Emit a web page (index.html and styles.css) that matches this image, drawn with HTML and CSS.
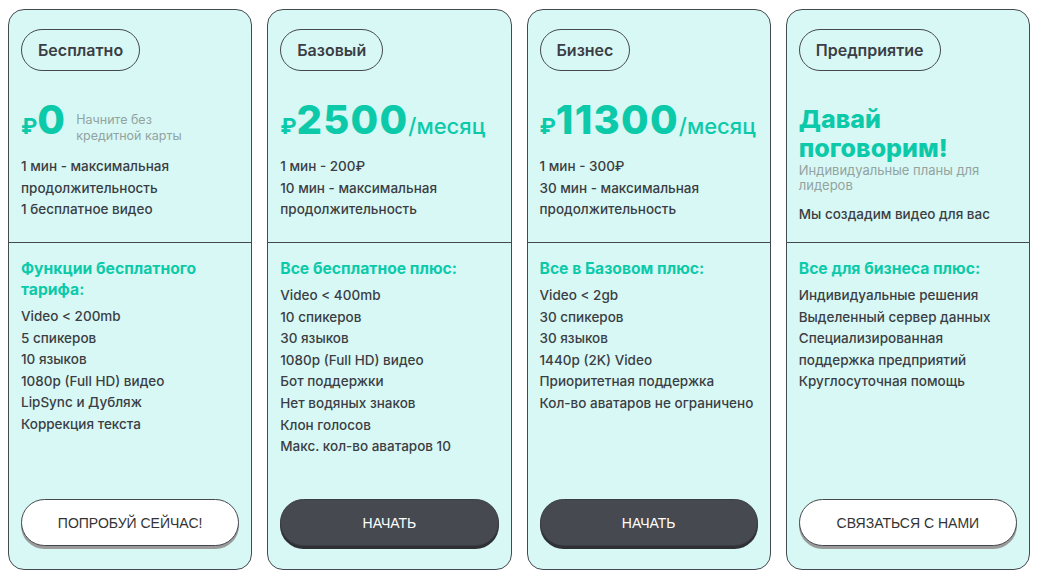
FILE: index.html
```html
<!DOCTYPE html>
<html lang="ru">
<head>
<meta charset="utf-8">
<link rel="stylesheet" href="styles.css">
</head>
<body>
<div class="plans">
  <div class="card">
    <div class="top">
      <div class="pill">Бесплатно</div>
      <div class="price-row">
        <div class="price"><span class="cur">₽</span>0</div>
        <div class="note">Начните без<br>кредитной карты</div>
      </div>
      <div class="list">
        <div>1 мин - максимальная продолжительность</div>
        <div>1 бесплатное видео</div>
      </div>
    </div>
    <div class="bottom">
      <div class="head">Функции бесплатного тарифа:</div>
      <div class="list">
        <div>Video &lt; 200mb</div>
        <div>5 спикеров</div>
        <div>10 языков</div>
        <div>1080p (Full HD) видео</div>
        <div>LipSync и Дубляж</div>
        <div>Коррекция текста</div>
      </div>
      <button class="btn light">ПОПРОБУЙ СЕЙЧАС!</button>
    </div>
  </div>

  <div class="card">
    <div class="top">
      <div class="pill">Базовый</div>
      <div class="price-row">
        <div class="price"><span class="cur">₽</span>2500<span class="per">/месяц</span></div>
      </div>
      <div class="list">
        <div>1 мин - 200₽</div>
        <div>10 мин - максимальная продолжительность</div>
      </div>
    </div>
    <div class="bottom">
      <div class="head">Все бесплатное плюс:</div>
      <div class="list">
        <div>Video &lt; 400mb</div>
        <div>10 спикеров</div>
        <div>30 языков</div>
        <div>1080p (Full HD) видео</div>
        <div>Бот поддержки</div>
        <div>Нет водяных знаков</div>
        <div>Клон голосов</div>
        <div>Макс. кол-во аватаров 10</div>
      </div>
      <button class="btn dark">НАЧАТЬ</button>
    </div>
  </div>

  <div class="card">
    <div class="top">
      <div class="pill">Бизнес</div>
      <div class="price-row">
        <div class="price"><span class="cur">₽</span>11300<span class="per">/месяц</span></div>
      </div>
      <div class="list">
        <div>1 мин - 300₽</div>
        <div>30 мин - максимальная продолжительность</div>
      </div>
    </div>
    <div class="bottom">
      <div class="head">Все в Базовом плюс:</div>
      <div class="list">
        <div>Video &lt; 2gb</div>
        <div>30 спикеров</div>
        <div>30 языков</div>
        <div>1440p (2K) Video</div>
        <div>Приоритетная поддержка</div>
        <div>Кол-во аватаров не ограничено</div>
      </div>
      <button class="btn dark">НАЧАТЬ</button>
    </div>
  </div>

  <div class="card">
    <div class="top">
      <div class="pill">Предприятие</div>
      <div class="talk">Давай поговорим!</div>
      <div class="sub">Индивидуальные планы для лидеров</div>
      <div class="list talk-list">
        <div>Мы создадим видео для вас</div>
      </div>
    </div>
    <div class="bottom">
      <div class="head">Все для бизнеса плюс:</div>
      <div class="list">
        <div>Индивидуальные решения</div>
        <div>Выделенный сервер данных</div>
        <div>Специализированная поддержка предприятий</div>
        <div>Круглосуточная помощь</div>
      </div>
      <button class="btn light">СВЯЗАТЬСЯ С НАМИ</button>
    </div>
  </div>
</div>
</body>
</html>
```

FILE: styles.css
```css
* { box-sizing: border-box; }

body {
  margin: 9px 8px 8px;
  font-family: Inter, "Noto Sans", sans-serif;
  color: #3b3e44;
  background: #ffffff;
}

.plans {
  display: grid;
  grid-template-columns: repeat(4, 1fr);
  gap: 15px;
}

.card {
  height: 561px;
  background: #d8f8f5;
  border: 1px solid #45494f;
  border-radius: 16px;
  display: flex;
  flex-direction: column;
}

.top {
  height: 233px;
  padding: 19px 12px 0;
  border-bottom: 1px solid #45494f;
  flex: none;
}

.pill {
  display: inline-block;
  height: 42px;
  line-height: 40px;
  padding: 0 16px;
  border: 1px solid #45494f;
  border-radius: 21px;
  font-size: 16px;
  font-weight: 600;
  color: #3b3e44;
}

.price-row {
  display: flex;
  align-items: flex-end;
  margin-top: 33px;
  height: 44px;
}

.price {
  font-size: 40px;
  font-weight: 800;
  line-height: 44px;
  color: #0ccaa9;
  letter-spacing: 1.2px;
  white-space: nowrap;
}

.cur {
  font-size: 22px;
  font-weight: 700;
  letter-spacing: 0;
}

.per {
  font-size: 22px;
  font-weight: 500;
  letter-spacing: 0;
}

.note {
  margin-left: 10px;
  margin-bottom: 5px;
  font-size: 12.5px;
  line-height: 15.5px;
  color: #93a3a1;
}

.list {
  font-size: 13.5px;
  font-weight: 500;
  line-height: 21.6px;
  color: #3b3e44;
}

.top .list {
  margin-top: 8px;
}

.talk {
  margin-top: 34px;
  font-size: 25px;
  font-weight: 800;
  line-height: 29px;
  color: #0ccaa9;
  width: 170px;
}

.sub {
  font-size: 13px;
  line-height: 15px;
  color: #93a3a1;
}

.top .talk-list {
  margin-top: 11px;
}

.bottom {
  flex: 1;
  display: flex;
  flex-direction: column;
  padding: 15px 12px 23px;
}

.head {
  font-size: 15.7px;
  font-weight: 700;
  line-height: 21px;
  color: #0ccaa9;
  margin-bottom: 6px;
}

.btn {
  margin-top: auto;
  width: 100%;
  height: 47px;
  border-radius: 24px;
  font-family: "Liberation Sans", Arial, sans-serif;
  font-size: 14px;
  cursor: pointer;
}

.btn.light {
  background: #ffffff;
  border: 1px solid #45494f;
  color: #333333;
  box-shadow: 0 3px 0 #9a9a9a;
}

.btn.dark {
  background: #464950;
  border: 1px solid #3a3d42;
  color: #ffffff;
  box-shadow: 0 3px 0 #2e3034;
}
```
